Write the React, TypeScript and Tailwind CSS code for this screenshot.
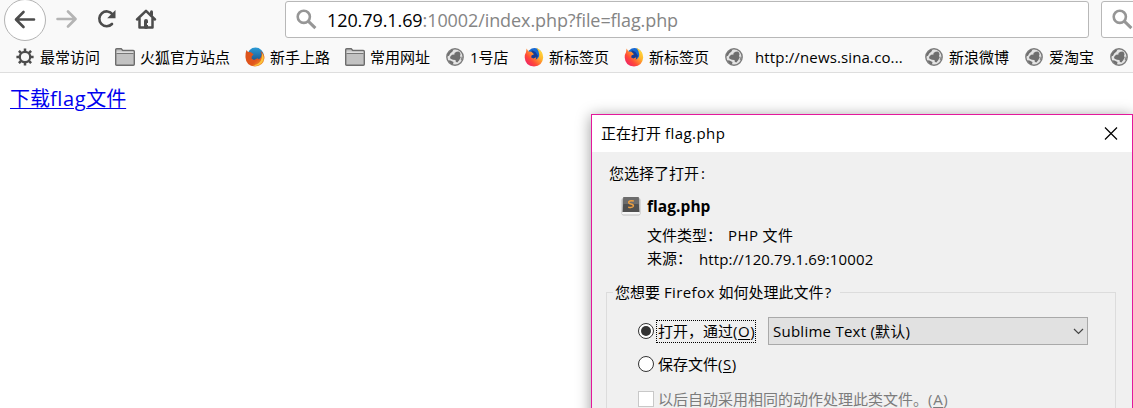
import React from "react";

const GlobeIcon = () => (
  <svg width="18" height="18" viewBox="0 0 18 18">
    <circle cx="9" cy="9" r="8.2" fill="#e4e4e4" stroke="#7c7c7c" strokeWidth="1.4" />
    <path d="M1 8.500 2.200 5 5 2 7.500 1.500 6.500 3.400 4.200 5.500 3 7.800ZM8.500 5 10.500 3.800 12.500 3.500 14 4.500 14.500 6.500 14 8 14.800 9.500 13 12.500 11.300 14.500 9.800 13.800 9.500 12 7 11.800 4.500 10.800 4 9 6 6.800 8.500 6.400ZM2 12.200 4.500 12.400 7.500 14 7 16.500 4.500 15.600Z" fill="#6f6f6f" />
    <path d="M15.600 8.500 17 9 16 12.500 14.600 12Z" fill="#8a8a8a" />
  </svg>
);

const FolderIcon = () => (
  <svg width="20" height="18" viewBox="0 0 20 18">
    <path d="M.7 15.8V1.700q0-1 1-1h4.500L7.800 2.500h10.500q1 0 1 1v12.800q0 1-1 1H1.700q-1 0-1-1Z" fill="#c2c2c2" stroke="#6d6d6d" strokeWidth="1.400" />
    <path d="M1.500 5.500h17" stroke="#777" strokeWidth="1" />
    <path d="M1.600 4.200h16.800" stroke="#e4e4e4" strokeWidth="1.200" />
  </svg>
);

const GearIcon = () => (
  <svg width="18" height="18" viewBox="0 0 18 18" fill="none" stroke="#4d4d4d">
    <circle cx="9" cy="9" r="5.200" strokeWidth="2.200" />
    <path d="M9 .4v3M9 14.600v3M.4 9h3M14.600 9h3M2.900 2.900 5 5M13 13l2.100 2.100M15.100 2.900 13 5M5 13l-2.100 2.100" strokeWidth="2.500" />
  </svg>
);

const FirefoxOldIcon = () => (
  <svg width="20" height="20" viewBox="0 0 20 20">
    <defs>
      <linearGradient id="fox-old" x1="0" y1="0" x2="1" y2="1">
        <stop offset="0" stopColor="#d9541c" />
        <stop offset=".6" stopColor="#e2551c" />
        <stop offset="1" stopColor="#f9b233" />
      </linearGradient>
      <linearGradient id="globe-old" x1="0" y1="0" x2="0" y2="1">
        <stop offset="0" stopColor="#2b9bd6" />
        <stop offset="1" stopColor="#17477f" />
      </linearGradient>
    </defs>
    <circle cx="10.500" cy="8.800" r="8.200" fill="url(#globe-old)" />
    <path d="M1.500 3 3 5 6 5.300 8.600 7.600 6.800 9.200 6.500 11.500 9 13 12.500 11.300 14 12.500Q16.800 10.500 16.600 7L15.500 3.800Q19.500 7 19.500 11 18.500 19 10 19.400 1 19 .5 10.500.3 6 1.500 3Z" fill="url(#fox-old)" />
    <path d="M17.200 6Q20.500 11 17 15.800 13 19.800 8 18.600 15.500 17 16.700 11Z" fill="#fbc33b" />
  </svg>
);

const FirefoxIcon = ({ id }: { id: string }) => (
  <svg width="20" height="20" viewBox="0 0 20 20">
    <defs>
      <linearGradient id={id} x1="1" y1="0" x2="0" y2="1">
        <stop offset="0" stopColor="#fff04a" />
        <stop offset=".35" stopColor="#ffb52b" />
        <stop offset=".65" stopColor="#ff4b38" />
        <stop offset="1" stopColor="#e8107e" />
      </linearGradient>
    </defs>
    <circle cx="10.500" cy="8.500" r="7.400" fill="#1769d2" />
    <path d="M8 3.200 11.500 5 14 9 12 13 7 13 5 9Z" fill="#183c94" />
    <path d="M2.600 1.600 4.400 4.400 7.400 4.700 10 7.300 7.500 8.500 7.200 10.500 9.500 11.500 12.300 10.300 11.600 12.700Q15.400 11 15.200 7.500 15 4 12.400.8 19.200 4 19.200 10.500 18.500 19 10 19.400 1.200 19 .7 10.500.6 7.500 2 5.300Z" fill={`url(#${id})`} />
  </svg>
);

const SearchIcon = () => (
  <svg width="21" height="21" viewBox="0 0 21 21" fill="none" stroke="#969696">
    <circle cx="7.800" cy="7.800" r="6.100" strokeWidth="2.600" />
    <path d="m12.200 12.200 7.200 7" strokeWidth="3" />
  </svg>
);

const SublimeIcon = () => (
  <svg width="20" height="20" viewBox="0 0 20 20">
    <rect x=".5" y="2" width="19" height="17.500" rx="2" fill="#bdbdbd" />
    <rect x="1" y="16" width="18" height="2.500" rx="1" fill="#f7f7f7" />
    <path d="M2.500 1h15l.8 15H1.700Z" fill="#505050" />
    <path d="M2.600 1h14.800l.4 7H2.200Z" fill="#6c6c6c" />
    <path d="M12.800 5Q7.600 4.200 7.700 6.400 7.700 7.500 10 8 12.600 8.500 12.400 10.200 12 12 7.200 11.200" fill="none" stroke="#f0a040" strokeWidth="1.500" />
  </svg>
);

const bookmarks = [
  { icon: <GearIcon />, text: "最常访问", w: "w-[99px]", gap: "w-[24px]" },
  { icon: <FolderIcon />, text: "火狐官方站点", w: "w-[130px]", gap: "w-[25px]" },
  { icon: <FirefoxOldIcon />, text: "新手上路", w: "w-[100px]", gap: "w-[25px]" },
  { icon: <FolderIcon />, text: "常用网址", w: "w-[101px]", gap: "w-[25px]" },
  { icon: <GlobeIcon />, text: "1号店", w: "w-[78px]", gap: "w-[24px]" },
  { icon: <FirefoxIcon id="fx-a" />, text: "新标签页", w: "w-[100px]", gap: "w-[25px]" },
  { icon: <FirefoxIcon id="fx-b" />, text: "新标签页", w: "w-[101px]", gap: "w-[25px]" },
  { icon: <GlobeIcon />, text: "http://news.sina.co...", w: "w-[200px] tracking-[0.140px]", gap: "w-[30px]" },
  { icon: <GlobeIcon />, text: "新浪微博", w: "w-[100px]", gap: "w-[24px]" },
  { icon: <GlobeIcon />, text: "爱淘宝", w: "w-[85px]", gap: "w-[24px]" },
  { icon: <GlobeIcon />, text: "", w: "w-[23px]", gap: "w-[23px]" },
];

function Toolbar() {
  return (
    <div className="flex h-[40px] shrink-0">
      <div className="flex w-[285px] shrink-0 items-start">
        <div className="-mt-px ml-[4px] flex size-[42px] shrink-0 items-center justify-center rounded-full border border-[#b3b3b3] bg-white">
          <svg width="22" height="20" viewBox="0 0 22 20" fill="none" stroke="#4c4c4c" strokeWidth="2.600" strokeLinecap="round" strokeLinejoin="round">
            <path d="M20 9.500H2.500M9.500 2 2 9.500l7.500 7.500" />
          </svg>
        </div>
        <svg className="ml-[9px] mt-[9px] shrink-0" width="22" height="20" viewBox="0 0 22 20" fill="none" stroke="#b4b4b4" strokeWidth="2.600" strokeLinecap="round" strokeLinejoin="round">
          <path d="M2.500 10h17M13 2.500l7.500 7.500-7.500 7.500" />
        </svg>
        <svg className="ml-[19px] mt-[9px] shrink-0" width="21" height="20" viewBox="0 0 21 20" fill="none">
          <path d="M16 15A7.400 7.400 0 1 1 16.500 5.200" stroke="#4c4c4c" strokeWidth="2.600" strokeLinecap="round" />
          <path d="M19.500 1v8.300h-8.300Z" fill="#4c4c4c" />
        </svg>
        <svg className="ml-[18px] mt-[9px] shrink-0" width="22" height="21" viewBox="0 0 22 21" fill="none" stroke="#4c4c4c" strokeWidth="2.500" strokeLinecap="round" strokeLinejoin="round">
          <path d="M2 10.500 11 1.800l9 8.700M4.500 9.500v9h13v-9" />
          <path d="M16.500 2.800v3" strokeWidth="3" />
          <path d="M11 12v6" strokeWidth="4" />
          <path d="M12.500 14.500v1" stroke="#fff" strokeWidth="1" />
        </svg>
      </div>
      <div className="mt-px flex h-[37px] w-[804px] shrink-0 items-center rounded-[3px] border border-[#b8b8b8] bg-white pl-[10px]">
        <SearchIcon />
        <span className="ml-[10px] text-[18px] tracking-[-0.090px] text-[#858585]">
          <span className="text-black">120.79.1.69</span>:10002/index.php?file=flag.php
        </span>
      </div>
      <div className="ml-[12px] mt-px flex h-[37px] w-[200px] shrink-0 items-center rounded-[3px] border border-[#b8b8b8] bg-white pl-[10px]">
        <SearchIcon />
      </div>
    </div>
  );
}

function Radio({ checked }: { checked?: boolean }) {
  return (
    <span className="flex size-[16px] shrink-0 items-center justify-center rounded-full border border-[#333] bg-white">
      {checked && <span className="size-[10px] rounded-full bg-[#333]" />}
    </span>
  );
}

function DownloadDialog() {
  return (
    <div className="absolute left-[591px] top-[114px] h-[320px] w-[542px] border border-[#e3189b] bg-[#f0f0f0] shadow-[0_2px_14px_rgba(0,0,0,0.4)]">
      <div className="flex h-[37px] items-center justify-between bg-white pl-[9px] pr-[14px]">
        <span className="-mt-[2px]">正在打开 <span className="tracking-[0.450px]">flag.php</span></span>
        <svg width="14" height="14" viewBox="0 0 14 14" stroke="#000" strokeWidth="1.200">
          <path d="m1 .5 12 12M13 .5 1 12.500" />
        </svg>
      </div>
      <div className="flex h-[42px] items-center pl-[17px]">您选择了打开<span className="ml-[2px]">:</span></div>
      <div className="-mt-px flex h-[26px] items-center pl-[29px]">
        <SublimeIcon />
        <span className="ml-[6px] text-[15.500px] font-bold tracking-[0.050px]">flag.php</span>
      </div>
      <div className="mt-[4px] flex h-[23px] items-center pl-[55px]">
        <span className="w-[81px]">文件类型：</span>
        <span className="tracking-[0.400px]">PHP 文件</span>
      </div>
      <div className="flex h-[24px] items-center pl-[55px]">
        <span className="w-[52px]">来源：</span>
        <span className="mt-px tracking-[0.130px]">http://120.79.1.69:10002</span>
      </div>
      <fieldset className="ml-[14px] mt-[10px] h-[160px] w-[510px] border border-[#dcdcdc]">
        <legend className="ml-[6px] flex h-[24px] items-center pl-[2px] pr-[9px]"><span className="whitespace-pre">您想要 <span className="tracking-[0.400px]">Firefox</span> 如何处理此文件<span className="ml-px">?</span></span></legend>
        <div className="mt-[13px] flex h-[28px] items-center pl-[31px]">
          <Radio checked />
          <span className="ml-[2px] flex h-[23px] w-[100px] items-center border border-dotted border-black pl-px">
            打开，通过<span className="tracking-[0.500px]">(<u className="underline-offset-2">O</u>)</span>
          </span>
          <div className="ml-[12px] flex h-[28px] w-[320px] items-center justify-between border border-[#a9a9a9] bg-[#e1e1e1] pl-[4px] pr-[3px]">
            <span className="tracking-[0.250px]">Sublime Text (默认)</span>
            <svg width="11" height="7" viewBox="0 0 11 7" fill="none" stroke="#444" strokeWidth="1.200">
              <path d="m1 1 4.500 4.500L10 1" />
            </svg>
          </div>
        </div>
        <div className="mt-[7px] flex h-[24px] items-center pl-[31px]">
          <Radio />
          <span className="ml-[4px]">保存文件<span className="tracking-[0.500px]">(<u className="underline-offset-2">S</u>)</span></span>
        </div>
        <div className="mt-[11px] flex h-[24px] items-center pl-[31px] text-[#7c7c7c]">
          <span className="size-[16px] shrink-0 border border-[#c8c8c8] bg-white" />
          <span className="ml-[4px]">以后自动采用相同的动作处理此类文件。<span className="tracking-[0.700px]">(<u className="underline-offset-2">A</u>)</span></span>
        </div>
      </fieldset>
    </div>
  );
}

export default function App() {
  return (
    <div className="relative flex h-[408px] w-[1133px] flex-col overflow-hidden whitespace-nowrap bg-white font-['Open_Sans','Noto_Sans_CJK_SC',sans-serif] text-[15px] leading-[20px] text-black">
      <header className="flex h-[73px] shrink-0 flex-col border-b border-[#dedede] bg-[#f9f9f9]">
        <Toolbar />
        <nav className="flex h-[34px] items-center pl-[16px]">
          {bookmarks.map((b, i) => (
            <div key={i} className={`flex shrink-0 items-center ${b.w}`}>
              <span className={`mt-[2px] flex h-[20px] shrink-0 items-center ${b.gap}`}>{b.icon}</span>
              <span className="mt-[2px] h-[20px]">{b.text}</span>
            </div>
          ))}
        </nav>
      </header>
      <main className="pl-[10px] pt-[11px]">
        <a className="text-[20px] leading-[30px] text-[#0000ee] underline decoration-1 underline-offset-[2px]">下载<span className="tracking-[0.600px]">flag</span>文件</a>
      </main>
      <DownloadDialog />
    </div>
  );
}
